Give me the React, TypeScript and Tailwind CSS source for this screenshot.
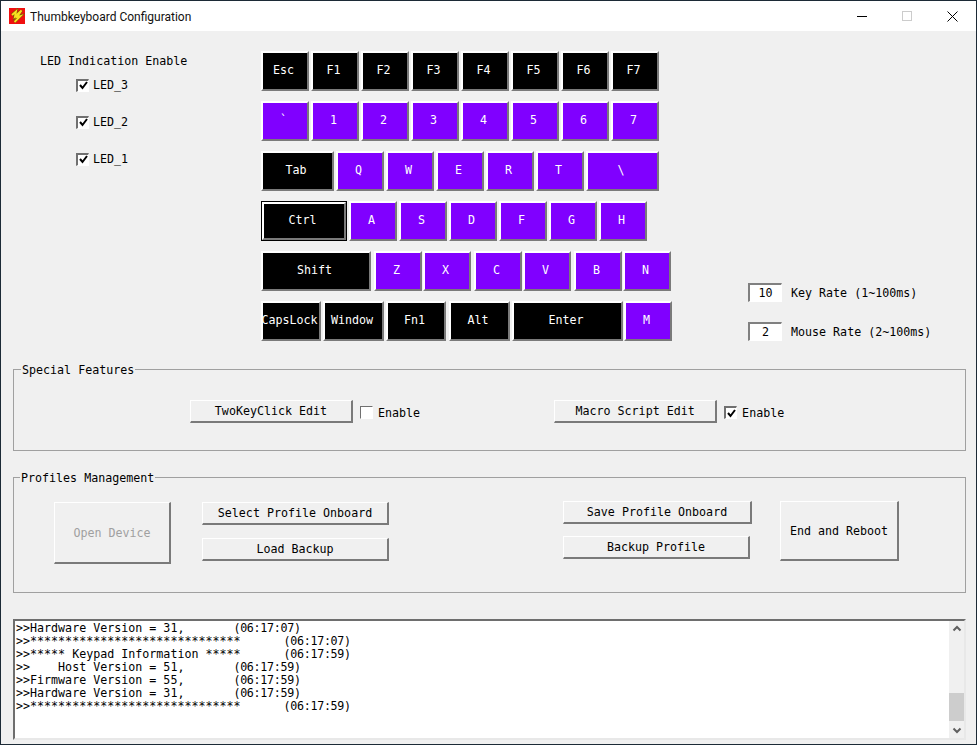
import React from 'react';

const mono = "font-['DejaVu_Sans_Mono',monospace] text-[11.67px] leading-[14px]";

type KeyDef = { label: string; cls: string; dark?: boolean; focus?: boolean };

// one row per line of the keyboard, margins carry the uneven gaps of the dialog
const rows: KeyDef[][] = [
  [
    { label: 'Esc', cls: 'w-[48px]', dark: true },
    { label: 'F1', cls: 'w-[48px] ml-[2px]', dark: true },
    { label: 'F2', cls: 'w-[48px] ml-[2px]', dark: true },
    { label: 'F3', cls: 'w-[48px] ml-[2px]', dark: true },
    { label: 'F4', cls: 'w-[48px] ml-[2px]', dark: true },
    { label: 'F5', cls: 'w-[48px] ml-[2px]', dark: true },
    { label: 'F6', cls: 'w-[48px] ml-[2px]', dark: true },
    { label: 'F7', cls: 'w-[48px] ml-[2px]', dark: true },
  ],
  [
    { label: '`', cls: 'w-[48px]' },
    { label: '1', cls: 'w-[48px] ml-[2px]' },
    { label: '2', cls: 'w-[48px] ml-[2px]' },
    { label: '3', cls: 'w-[48px] ml-[2px]' },
    { label: '4', cls: 'w-[48px] ml-[2px]' },
    { label: '5', cls: 'w-[48px] ml-[2px]' },
    { label: '6', cls: 'w-[48px] ml-[2px]' },
    { label: '7', cls: 'w-[48px] ml-[2px]' },
  ],
  [
    { label: 'Tab', cls: 'w-[73px]', dark: true },
    { label: 'Q', cls: 'w-[48px] ml-[2px]' },
    { label: 'W', cls: 'w-[48px] ml-[2px]' },
    { label: 'E', cls: 'w-[48px] ml-[2px]' },
    { label: 'R', cls: 'w-[48px] ml-[2px]' },
    { label: 'T', cls: 'w-[48px] ml-[2px]' },
    { label: '\\', cls: 'w-[73px] ml-[2px]' },
  ],
  [
    { label: 'Ctrl', cls: 'w-[86px]', dark: true, focus: true },
    { label: 'A', cls: 'w-[48px] ml-[2px]' },
    { label: 'S', cls: 'w-[48px] ml-[2px]' },
    { label: 'D', cls: 'w-[48px] ml-[2px]' },
    { label: 'F', cls: 'w-[48px] ml-[2px]' },
    { label: 'G', cls: 'w-[48px] ml-[2px]' },
    { label: 'H', cls: 'w-[48px] ml-[2px]' },
  ],
  [
    { label: 'Shift', cls: 'w-[110px]', dark: true },
    { label: 'Z', cls: 'w-[48px] ml-[3px]' },
    { label: 'X', cls: 'w-[48px] ml-[1px]' },
    { label: 'C', cls: 'w-[48px] ml-[3px]' },
    { label: 'V', cls: 'w-[48px] ml-[1px]' },
    { label: 'B', cls: 'w-[48px] ml-[3px]' },
    { label: 'N', cls: 'w-[48px] ml-[1px]' },
  ],
  [
    { label: 'CapsLock', cls: 'w-[60px]', dark: true },
    { label: 'Window', cls: 'w-[61px] ml-[2px]', dark: true },
    { label: 'Fn1', cls: 'w-[60px] ml-[2px]', dark: true },
    { label: 'Alt', cls: 'w-[61px] ml-[3px]', dark: true },
    { label: 'Enter', cls: 'w-[111px] ml-[2px]', dark: true },
    { label: 'M', cls: 'w-[48px] ml-[1px]' },
  ],
];

const bevel = 'border-t-2 border-l-2 border-b-2 border-r-2 border-t-white border-l-white border-b-[#7a7a7a] border-r-[#7a7a7a]';

const Key = ({ k }: { k: KeyDef }) => (
  <div className={`${k.cls} h-[40px] shrink-0 ${k.focus ? 'border border-black' : ''}`}>
    <div className={`h-full flex items-center justify-center overflow-hidden text-white pb-[2px] pr-[3px] ${bevel} ${k.dark ? 'bg-black' : 'bg-[#8000ff]'} ${mono}`}>
      {k.label}
    </div>
  </div>
);

const Check = () => (
  <svg width="9" height="9" viewBox="0 0 9 9">
    <path d="M1 4 L3.5 7 L8 1" fill="none" stroke="#000" strokeWidth="2" />
  </svg>
);

const CheckBox = ({ on }: { on: boolean }) => (
  <div className={`w-[13px] h-[13px] bg-white border border-t-[#707070] border-l-[#707070] border-b-white border-r-white flex items-center justify-center shrink-0 ${on ? 'border-t-2 border-l-2' : ''}`}>
    {on && <Check />}
  </div>
);

const LedRow = ({ label, cls }: { label: string; cls: string }) => (
  <div className={`flex items-center ${cls}`}>
    <CheckBox on />
    <span className={`ml-[4px] ${mono}`}>{label}</span>
  </div>
);

const Btn = ({ label, cls, disabled }: { label: string; cls: string; disabled?: boolean }) => (
  <div className={`${cls} flex items-center justify-center bg-[#f0f0f0] border-t border-l border-t-white border-l-white border-b-2 border-r-2 border-b-[#7a7a7a] border-r-[#7a7a7a] ${disabled ? 'text-[#a0a0a0]' : 'text-black'} ${mono}`}>
    {label}
  </div>
);

const GroupBox = ({ title, titleCls, cls, children }: { title: string; titleCls: string; cls: string; children: React.ReactNode }) => (
  <div className={`relative border border-[#a0a0a0] ${cls}`}>
    <span className={`absolute top-[-7px] bg-[#f0f0f0] px-[1px] ${titleCls} ${mono}`}>{title}</span>
    {children}
  </div>
);

const logLines = [
  ['>>Hardware Version = 31,', '(06:17:07)', 'ml-[49px]'],
  ['>>******************************', '(06:17:07)', 'ml-[43px]'],
  ['>>***** Keypad Information *****', '(06:17:59)', 'ml-[43px]'],
  ['>>    Host Version = 51,', '(06:17:59)', 'ml-[49px]'],
  ['>>Firmware Version = 55,', '(06:17:59)', 'ml-[49px]'],
  ['>>Hardware Version = 31,', '(06:17:59)', 'ml-[49px]'],
  ['>>******************************', '(06:17:59)', 'ml-[43px]'],
];

export default function App() {
  return (
    <div className="w-[977px] h-[745px] bg-[#f0f0f0] text-black flex flex-col overflow-hidden border border-[#1c2a36]">
      {/* title bar */}
      <div className="h-[30px] bg-white flex items-center shrink-0">
        <svg width="16" height="16" viewBox="0 0 16 16" className="ml-[8px] shrink-0">
          <rect width="16" height="16" fill="#f01010" />
          <path d="M3 7 L7 3.5 L6 8.5 L12.5 2.5 L8 9 L11.5 8 L5.5 14" fill="none" stroke="#7a5a00" strokeWidth="3" />
          <path d="M3 7 L7 3.5 L6 8.5 L12.5 2.5 L8 9 L11.5 8 L5.5 14" fill="none" stroke="#f8e020" strokeWidth="1.8" />
        </svg>
        <span className="ml-[5px] mt-[1px] font-['Roboto',sans-serif] text-[12px] text-[#111] whitespace-nowrap">Thumbkeyboard Configuration</span>
        <div className="ml-auto flex items-center">
          <div className="w-[10px] h-[1px] bg-black mr-[35px]" />
          <div className="w-[10px] h-[10px] border border-[#cccccc] mr-[35px]" />
          <svg width="11" height="11" viewBox="0 0 11 11" className="mr-[18px]">
            <path d="M0.5 0.5 L10.5 10.5 M10.5 0.5 L0.5 10.5" stroke="#000" strokeWidth="1" />
          </svg>
        </div>
      </div>

      {/* upper area: leds, keyboard, rates */}
      <div className="flex h-[318px] shrink-0 pt-[20px]">
        <div className="w-[260px] shrink-0 pl-[39px] pt-[3px]">
          <div className={mono}>LED Indication Enable</div>
          <LedRow label="LED_3" cls="ml-[36px] mt-[10px]" />
          <LedRow label="LED_2" cls="ml-[36px] mt-[23px]" />
          <LedRow label="LED_1" cls="ml-[36px] mt-[23px]" />
        </div>
        <div className="w-[412px] shrink-0 flex flex-col gap-[10px]">
          {rows.map((row, i) => (
            <div key={i} className="flex">
              {row.map((k) => (
                <Key key={k.label} k={k} />
              ))}
            </div>
          ))}
        </div>
        <div className="flex flex-col pt-[232px] pl-[75px]">
          <div className="flex items-center">
            <div className={`w-[34px] h-[19px] bg-white border border-t-2 border-l-2 border-t-[#808080] border-l-[#808080] border-b-white border-r-white flex items-center justify-center ${mono}`}>10</div>
            <span className={`ml-[9px] whitespace-nowrap ${mono}`}>Key Rate (1~100ms)</span>
          </div>
          <div className="flex items-center mt-[20px]">
            <div className={`w-[34px] h-[19px] bg-white border border-t-2 border-l-2 border-t-[#808080] border-l-[#808080] border-b-white border-r-white flex items-center justify-center ${mono}`}>2</div>
            <span className={`ml-[9px] whitespace-nowrap ${mono}`}>Mouse Rate (2~100ms)</span>
          </div>
        </div>
      </div>

      {/* special features */}
      <div className="pl-[12px] pt-[20px]">
        <GroupBox title="Special Features" titleCls="left-[7px]" cls="w-[953px] h-[82px]">
          <div className="flex items-center pl-[176px] pt-[30px]">
            <Btn label="TwoKeyClick Edit" cls="w-[163px] h-[23px] shrink-0" />
            <div className="ml-[7px] mt-[2px] flex items-center">
              <CheckBox on={false} />
              <span className={`ml-[5px] ${mono}`}>Enable</span>
            </div>
            <Btn label="Macro Script Edit" cls="w-[163px] h-[23px] ml-[134px] shrink-0" />
            <div className="ml-[7px] mt-[2px] flex items-center">
              <CheckBox on />
              <span className={`ml-[5px] ${mono}`}>Enable</span>
            </div>
          </div>
        </GroupBox>
      </div>

      {/* profiles */}
      <div className="pl-[12px] pt-[26px]">
        <GroupBox title="Profiles Management" titleCls="left-[6px]" cls="w-[953px] h-[116px]">
          <div className="flex pl-[40px] pt-[24px]">
            <Btn label="Open Device" cls="w-[117px] h-[62px] shrink-0" disabled />
            <div className="ml-[31px] flex flex-col gap-[13px] shrink-0">
              <Btn label="Select Profile Onboard" cls="w-[187px] h-[23px]" />
              <Btn label="Load Backup" cls="w-[187px] h-[23px]" />
            </div>
            <div className="ml-[174px] flex flex-col gap-[12px] shrink-0 mt-[-1px]">
              <Btn label="Save Profile Onboard" cls="w-[189px] h-[23px]" />
              <Btn label="Backup Profile" cls="w-[187px] h-[23px]" />
            </div>
            <Btn label="End and Reboot" cls="w-[119px] h-[60px] ml-[28px] mt-[-1px] shrink-0" />
          </div>
        </GroupBox>
      </div>

      {/* log */}
      <div className="pl-[12px] pt-[26px]">
        <div className="w-[953px] h-[121px] bg-white border-t-2 border-l-2 border-t-[#6e6e6e] border-l-[#6e6e6e] border-b-2 border-r-2 border-b-[#e8e8e8] border-r-[#e8e8e8] flex">
          <div className="flex-1 pt-[1px] pl-px font-['DejaVu_Sans_Mono',monospace] text-[11.67px] leading-[13px] whitespace-pre">
            {logLines.map(([a, b, c], i) => (
              <div key={i} className="flex">
                <span>{a}</span>
                <span className={`${c} tracking-[-0.3px]`}>{b}</span>
              </div>
            ))}
          </div>
          <div className="w-[15px] bg-[#f0f0f0] flex flex-col items-center justify-between">
            <svg width="10" height="10" viewBox="0 0 10 10" className="mt-[3px]">
              <path d="M1.5 6.5 L5 3 L8.5 6.5" fill="none" stroke="#606060" strokeWidth="2" />
            </svg>
            <div className="flex flex-col items-center w-full">
              <div className="w-full h-[28px] bg-[#cdcdcd]" />
              <svg width="10" height="10" viewBox="0 0 10 10" className="mt-[4px] mb-[3px]">
                <path d="M1.5 3.5 L5 7 L8.5 3.5" fill="none" stroke="#606060" strokeWidth="2" />
              </svg>
            </div>
          </div>
        </div>
      </div>
    </div>
  );
}
